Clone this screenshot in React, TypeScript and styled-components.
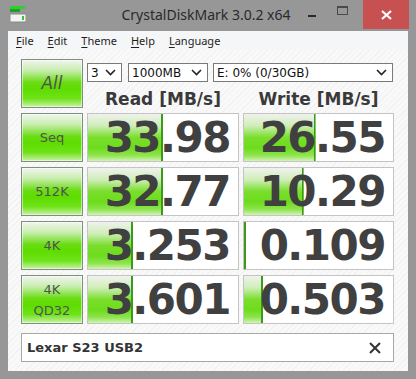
import React from 'react'
import styled, { createGlobalStyle } from 'styled-components'

const GlobalStyle = createGlobalStyle`
  html, body {
    margin: 0;
    padding: 0;
    width: 416px;
    height: 379px;
    overflow: hidden;
  }
`

interface Result {
  label: string
  multi?: boolean
  read: string
  readPct: number
  write: string
  writePct: number
}

const results: Result[] = [
  { label: 'Seq', read: '33.98', readPct: 50, write: '26.55', writePct: 48 },
  { label: '512K', read: '32.77', readPct: 50, write: '10.29', writePct: 40 },
  { label: '4K', read: '3.253', readPct: 30, write: '0.109', writePct: 1.4 },
  { label: '4K\nQD32', multi: true, read: '3.601', readPct: 30, write: '0.503', writePct: 13 },
]

const menus = ['File', 'Edit', 'Theme', 'Help', 'Language']

const Chevron = () => (
  <svg width='11' height='7' viewBox='0 0 11 7'>
    <polyline points='1,1 5.5,5.5 10,1' fill='none' stroke='#222' strokeWidth='1.6' />
  </svg>
)

const App = () => {
  return (
    <Window>
      <GlobalStyle />
      <TitleBar>
        <AppIcon>
          <svg width='16' height='17' viewBox='0 0 16 17'>
            <rect x='0' y='0' width='15' height='3' fill='#2fcf2f' />
            <rect x='0' y='3' width='10' height='3' fill='#1f9f2a' />
            <rect x='0' y='8' width='16' height='8' rx='1' fill='#f4f4f4' stroke='#8a8a8a' />
            <rect x='12' y='10' width='2' height='4' fill='#33c633' />
          </svg>
        </AppIcon>
        <Title>CrystalDiskMark 3.0.2 x64</Title>
        <Controls>
          <CtrlButton>
            <Minimize />
          </CtrlButton>
          <CtrlButton>
            <Maximize />
          </CtrlButton>
          <CloseButton>
            <svg width='11' height='10' viewBox='0 0 11 10'>
              <path d='M1 1 L10 9 M10 1 L1 9' stroke='#fff' strokeWidth='2.2' />
            </svg>
          </CloseButton>
        </Controls>
      </TitleBar>
      <Client>
        <MenuBar>
          {menus.map((m) => (
            <MenuItem key={m}>
              <u>{m[0]}</u>
              {m.slice(1)}
            </MenuItem>
          ))}
        </MenuBar>
        <Panel>
          <Grid>
            <TestButton $big>All</TestButton>
            <TopArea>
              <Selects>
                <Combo $width={35}>
                  <span>3</span>
                  <Chevron />
                </Combo>
                <Combo $width={80}>
                  <span>1000MB</span>
                  <Chevron />
                </Combo>
                <Combo $width={180}>
                  <span>E: 0% (0/30GB)</span>
                  <Chevron />
                </Combo>
              </Selects>
              <Headers>
                <Header>Read [MB/s]</Header>
                <Header>Write [MB/s]</Header>
              </Headers>
            </TopArea>
            {results.map((r) => (
              <React.Fragment key={r.label}>
                <TestButton $multi={r.multi}>{r.label}</TestButton>
                <Value style={{ backgroundSize: `${r.readPct}% 100%` }}>{r.read}</Value>
                <Value style={{ backgroundSize: `${r.writePct}% 100%` }}>{r.write}</Value>
              </React.Fragment>
            ))}
          </Grid>
          <Footer>
            <Comment>Lexar S23 USB2</Comment>
            <svg width='12' height='12' viewBox='0 0 12 12'>
              <path d='M1 1 L11 11 M11 1 L1 11' stroke='#333' strokeWidth='2' />
            </svg>
          </Footer>
        </Panel>
      </Client>
    </Window>
  )
}

export default App

const Window = styled.div`
    width: 416px;
    height: 379px;
    background: #979797;
    display: flex;
    flex-direction: column;
    box-sizing: border-box;
    font-family: 'DejaVu Sans', Verdana, sans-serif;
`

const TitleBar = styled.div`
    height: 31px;
    display: flex;
    align-items: flex-start;
`

const AppIcon = styled.div`
    margin: 6px 0 0 10px;
    width: 16px;
    height: 17px;
`

const Title = styled.div`
    flex: 1;
    text-align: center;
    font-family: 'Noto Sans', 'Open Sans', sans-serif;
    font-size: 14px;
    line-height: 29px;
    color: #2a2a2a;
    padding-left: 86px;
`

const Controls = styled.div`
    display: flex;
    margin-right: 7px;
`

const CtrlButton = styled.div`
    width: 26px;
    height: 20px;
    display: flex;
    align-items: center;
    justify-content: center;
    margin-top: 2px;
`

const Minimize = styled.div`
    width: 8px;
    height: 2px;
    background: #2a2a2a;
    margin-top: 7px;
    margin-right: 2px;
`

const Maximize = styled.div`
    width: 9px;
    height: 6px;
    border: 1px solid #4a4a4a;
    border-top-width: 2px;
    margin-top: -3px;
    margin-left: 6px;
`

const CloseButton = styled.div`
    width: 46px;
    height: 29px;
    margin-left: 11px;
    background: #c75050;
    display: flex;
    align-items: center;
    justify-content: center;
`

const Client = styled.div`
    flex: 1;
    margin: 0 8px 8px 8px;
    display: flex;
    flex-direction: column;
`

const MenuBar = styled.div`
    height: 19px;
    background: #f5f6f7;
    display: flex;
    align-items: center;
    padding-left: 1px;
    font-family: 'Noto Sans', 'Open Sans', sans-serif;
    font-size: 11px;
    color: #1e1e1e;
`

const MenuItem = styled.div`
    padding: 0 7px;
    u {
        text-decoration-thickness: 1px;
        text-underline-offset: 2px;
    }
`

const Panel = styled.div`
    flex: 1;
    padding: 9px 14px 0 13px;
    background: repeating-linear-gradient(135deg, #f9f9f9 0px, #f9f9f9 3px, #f2f2f2 3px, #f2f2f2 4px);
    display: flex;
    flex-direction: column;
`

const Grid = styled.div`
    display: grid;
    grid-template-columns: 62px 152px 151px;
    grid-auto-rows: 49px;
    column-gap: 4px;
    row-gap: 5px;
`

const TestButton = styled.div<{ $big?: boolean; $multi?: boolean }>`
    box-sizing: border-box;
    border: 1px solid #7d8f7d;
    background: linear-gradient(to bottom, #f2f4f0 0%, #c9eeb0 22%, #69dc12 48%, #5edd00 62%, #6fe219 82%, #c9f2a8 100%);
    box-shadow: inset 0 0 0 1px rgba(255, 255, 255, 0.5);
    display: flex;
    align-items: center;
    justify-content: center;
    text-align: center;
    white-space: pre-line;
    color: #525252;
    font-family: 'DejaVu Sans', sans-serif;
    font-size: ${(p) => (p.$big ? '17px' : '13px')};
    line-height: ${(p) => (p.$multi ? '21px' : '1')};
    font-style: ${(p) => (p.$big ? 'italic' : 'normal')};
`

const TopArea = styled.div`
    grid-column: 2 / 4;
    display: flex;
    flex-direction: column;
`

const Selects = styled.div`
    display: flex;
    margin-top: 4px;
    gap: 6px;
`

const Combo = styled.div<{ $width: number }>`
    box-sizing: border-box;
    width: ${(p) => p.$width}px;
    height: 19px;
    border: 1px solid #7a7a7a;
    background: #fff;
    display: flex;
    align-items: center;
    justify-content: space-between;
    padding: 0 5px 0 3px;
    font-size: 12px;
    color: #111;
    margin-left: ${(p) => (p.$width === 180 ? '-1px' : '0')};
`

const Headers = styled.div`
    display: grid;
    grid-template-columns: 152px 151px;
    column-gap: 4px;
    margin-top: 7px;
`

const Header = styled.div`
    text-align: center;
    font-weight: bold;
    font-size: 17px;
    color: #3a3a3a;
    line-height: 20px;
`

const Value = styled.div`
    box-sizing: border-box;
    border: 1px solid #c4c4c4;
    background-color: #fff;
    background-image:
        linear-gradient(to right, transparent calc(100% - 2px), #3b9a1a calc(100% - 2px)),
        linear-gradient(to bottom, #f0f2ee 0%, #cfeeb8 25%, #7ade2c 50%, #6ddc1c 72%, #8ee44e 88%, #d2f4b4 100%);
    background-repeat: no-repeat;
    background-position: left top;
    text-align: right;
    padding-right: 8px;
    font-weight: bold;
    font-size: 42px;
    letter-spacing: -1.5px;
    line-height: 47px;
    color: #404040;
`

const Footer = styled.div`
    box-sizing: border-box;
    margin-top: 9px;
    height: 29px;
    border: 1px solid #a8a8a8;
    background: #fff;
    display: flex;
    align-items: center;
    justify-content: space-between;
    padding: 0 12px 0 5px;
`

const Comment = styled.div`
    font-weight: bold;
    font-size: 13px;
    color: #333;
`
